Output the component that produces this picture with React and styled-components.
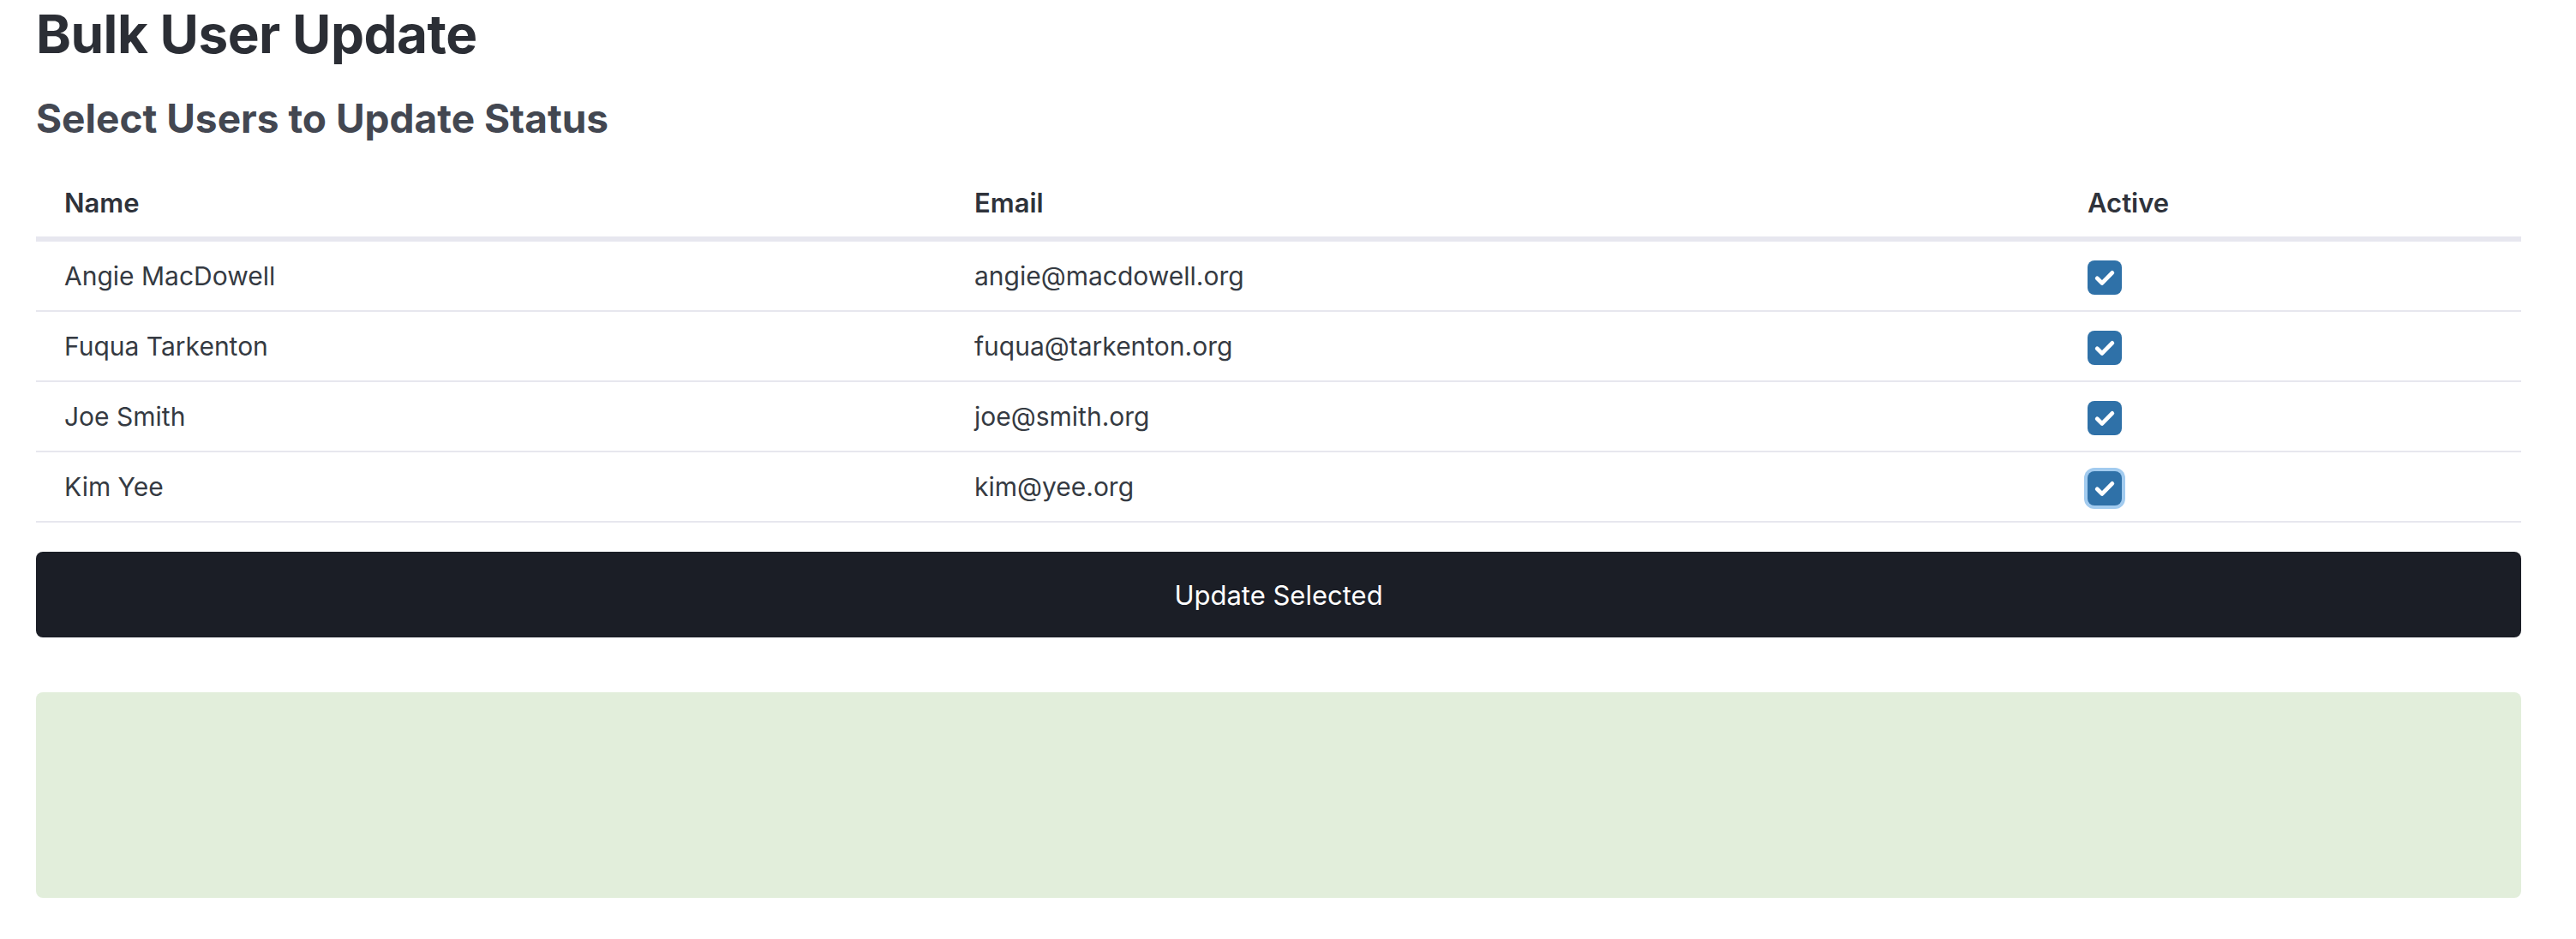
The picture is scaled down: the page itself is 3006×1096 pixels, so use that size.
import React from "react"
import styled, { createGlobalStyle } from "styled-components"

const users = [
  { name: "Angie MacDowell", email: "angie@macdowell.org", active: true },
  { name: "Fuqua Tarkenton", email: "fuqua@tarkenton.org", active: true },
  { name: "Joe Smith", email: "joe@smith.org", active: true },
  { name: "Kim Yee", email: "kim@yee.org", active: true, focused: true },
];

const GlobalStyle = createGlobalStyle`
  html, body { margin: 0; padding: 0; background: #fff; }
  body { font-family: Inter, "Noto Sans", "Liberation Sans", sans-serif; color: #353a42; }
`;

const Page = styled.div`
  padding: 2px 64px 0 42px;
`;

const Title = styled.h1`
  margin: 0;
  font-size: 62px;
  line-height: 76px;
  font-weight: 700;
  color: #2b2e35;
  letter-spacing: -0.5px;
`;

const Subtitle = styled.h2`
  margin: 35px 0 0;
  font-size: 46px;
  line-height: 50px;
  font-weight: 700;
  color: #434751;
`;

const Table = styled.table`
  width: 100%;
  margin-top: 33px;
  border-collapse: separate;
  border-spacing: 0;
  font-size: 30px;
`;

const Th = styled.th`
  box-sizing: border-box;
  height: 86px;
  padding: 0 33px;
  text-align: left;
  font-weight: 600;
  font-size: 31px;
  color: #2f333b;
  border-bottom: 6px solid #e7e7ef;
  width: ${(p) => p.$w || "auto"};
`;

const Td = styled.td`
  box-sizing: border-box;
  height: 82px;
  padding: 0 33px;
  border-bottom: 2px solid #e7e7ee;
  color: #353a42;
  vertical-align: middle;
`;

const Check = styled.span`
  display: inline-flex;
  align-items: center;
  justify-content: center;
  width: 40px;
  height: 40px;
  margin-top: 4px;
  border-radius: 8px;
  background: #2f71a8;
  box-shadow: ${(p) => (p.$focused ? "0 0 0 4px #a2cbef" : "none")};
  vertical-align: middle;
`;

const Button = styled.button`
  display: block;
  width: 100%;
  height: 100px;
  margin-top: 34px;
  border: none;
  border-radius: 8px;
  background: #1b1e26;
  color: #fff;
  font-family: inherit;
  font-size: 31px;
  font-weight: 400;
  cursor: pointer;
`;

const Result = styled.div`
  height: 240px;
  margin-top: 64px;
  border-radius: 8px;
  background: #e2eedb;
`;

const CheckBox = ({ focused }) => (
  <Check $focused={focused}>
    <svg width="40" height="40" viewBox="0 0 20 20">
      <path d="M5.6 10.4 L8.5 13.2 L14.4 7.2" fill="none" stroke="#fff" strokeWidth="2.4" strokeLinecap="round" strokeLinejoin="round" />
    </svg>
  </Check>
);

const App = () => {
  return (
    <Page>
      <GlobalStyle />
      <Title>Bulk User Update</Title>
      <Subtitle>Select Users to Update Status</Subtitle>
      <Table>
        <thead>
          <tr>
            <Th $w="1062px">Name</Th>
            <Th $w="1299px">Email</Th>
            <Th>Active</Th>
          </tr>
        </thead>
        <tbody>
          {users.map((u, k) => (
            <tr key={k}>
              <Td>{u.name}</Td>
              <Td>{u.email}</Td>
              <Td>{u.active && <CheckBox focused={u.focused} />}</Td>
            </tr>
          ))}
        </tbody>
      </Table>
      <Button>Update Selected</Button>
      <Result />
    </Page>
  )
}

export default App;
